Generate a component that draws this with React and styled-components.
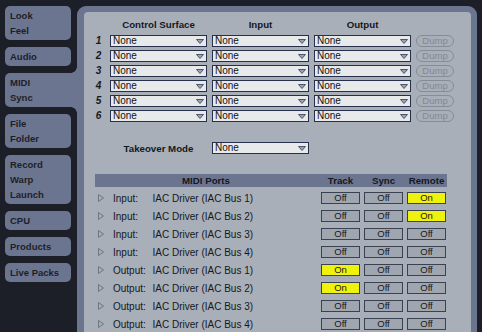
import styled, { createGlobalStyle } from 'styled-components';

const DARK = '#1c1f27';
const FRAME = '#6c7590';
const LIGHT = '#a8afb8';

const GlobalStyle = createGlobalStyle`
  html, body {
    margin: 0;
    padding: 0;
    background: ${DARK};
  }
  body {
    font-family: "Liberation Sans", Arial, sans-serif;
    color: #15181e;
  }
`;

const tabs = [
  ['Look', 'Feel'],
  ['Audio'],
  ['MIDI', 'Sync'],
  ['File', 'Folder'],
  ['Record', 'Warp', 'Launch'],
  ['CPU'],
  ['Products'],
  ['Live Packs'],
];

const ports = [
  { dir: 'Input:', bus: 1, track: false, sync: false, remote: true },
  { dir: 'Input:', bus: 2, track: false, sync: false, remote: true },
  { dir: 'Input:', bus: 3, track: false, sync: false, remote: false },
  { dir: 'Input:', bus: 4, track: false, sync: false, remote: false },
  { dir: 'Output:', bus: 1, track: true, sync: false, remote: false },
  { dir: 'Output:', bus: 2, track: true, sync: false, remote: false },
  { dir: 'Output:', bus: 3, track: false, sync: false, remote: false },
  { dir: 'Output:', bus: 4, track: false, sync: false, remote: false },
];

function Arrow() {
  return (
    <svg width="8" height="5" viewBox="0 0 8 5">
      <polygon points="0.5,0.5 7.5,0.5 4,4.5" fill="#9aa2b3" stroke="#4d566a" strokeWidth="1" />
    </svg>
  );
}

function Expander() {
  return (
    <svg width="6" height="8" viewBox="0 0 6 8">
      <polygon points="0.5,0.5 5.5,4 0.5,7.5" fill="none" stroke="#6d7484" strokeWidth="1" />
    </svg>
  );
}

function Select({ value = 'None' }) {
  return (
    <StSelect>
      <span>{value}</span>
      <Arrow />
    </StSelect>
  );
}

export default function App() {
  return (
    <>
      <GlobalStyle />
      <StPage>
        <StSidebar>
          {tabs.map((lines) => (
            <StTab key={lines[0]} $active={lines[0] === 'MIDI'}>
              {lines.map((l) => (
                <div key={l}>{l}</div>
              ))}
            </StTab>
          ))}
        </StSidebar>
        <StPanel>
          <StInner>
            <StSurfaceGrid>
              <span />
              <StColHead>Control Surface</StColHead>
              <StColHead>Input</StColHead>
              <StColHead>Output</StColHead>
              <span />
              {[1, 2, 3, 4, 5, 6].map((n) => (
                <StRowFrag key={n}>
                  <StNum>{n}</StNum>
                  <Select />
                  <Select />
                  <Select />
                  <StDump>Dump</StDump>
                </StRowFrag>
              ))}
            </StSurfaceGrid>

            <StTakeover>
              <StColHead>Takeover Mode</StColHead>
              <Select />
            </StTakeover>

            <StPorts>
              <StPortsHead>
                <span>MIDI Ports</span>
                <span>Track</span>
                <span>Sync</span>
                <span>Remote</span>
              </StPortsHead>
              {ports.map((p) => (
                <StPortRow key={p.dir + p.bus}>
                  <StPortName>
                    <Expander />
                    <StDir>{p.dir}</StDir>
                    <span>IAC Driver (IAC Bus {p.bus})</span>
                  </StPortName>
                  <StToggle $on={p.track}>{p.track ? 'On' : 'Off'}</StToggle>
                  <StToggle $on={p.sync}>{p.sync ? 'On' : 'Off'}</StToggle>
                  <StToggle $on={p.remote}>{p.remote ? 'On' : 'Off'}</StToggle>
                </StPortRow>
              ))}
            </StPorts>
          </StInner>
        </StPanel>
      </StPage>
    </>
  );
}

const StPage = styled.div`
  width: 482px;
  height: 332px;
  box-sizing: border-box;
  padding: 6px 5px 0 5px;
  display: flex;
  gap: 6px;
  overflow: hidden;
  background: ${DARK};
`;

const StSidebar = styled.div`
  width: 66px;
  flex: none;
  display: flex;
  flex-direction: column;
  gap: 7px;
`;

const StTab = styled.div`
  position: relative;
  background: ${FRAME};
  border-radius: ${(p) => (p.$active ? '5px 0 0 5px' : '5px')};
  margin-right: ${(p) => (p.$active ? '-6px' : '0')};
  padding: 2px 0 2px 5px;
  font-size: 9.5px;
  font-weight: bold;
  line-height: 15px;
  color: ${DARK};
  &::before,
  &::after {
    content: '';
    display: ${(p) => (p.$active ? 'block' : 'none')};
    position: absolute;
    right: 0;
    width: 6px;
    height: 6px;
  }
  &::before {
    top: -6px;
    background: radial-gradient(circle at 0 0, transparent 5.5px, ${FRAME} 6px);
  }
  &::after {
    bottom: -6px;
    background: radial-gradient(circle at 0 100%, transparent 5.5px, ${FRAME} 6px);
  }
`;

const StPanel = styled.div`
  width: 400px;
  flex: none;
  background: ${FRAME};
  border-radius: 9px 9px 0 0;
  padding: 6px 6px 0 7px;
  box-sizing: border-box;
  display: flex;
`;

const StInner = styled.div`
  flex: 1;
  background: ${LIGHT};
  border-radius: 4px 4px 0 0;
  padding-top: 5px;
`;

const StSurfaceGrid = styled.div`
  display: grid;
  grid-template-columns: 13px 97px 97px 97px 38px;
  grid-template-rows: 15px;
  grid-auto-rows: 12px;
  column-gap: 5px;
  row-gap: 3px;
  padding-left: 8px;
`;

const StRowFrag = styled.div`
  display: contents;
`;

const StColHead = styled.div`
  font-size: 9.7px;
  font-weight: bold;
  text-align: center;
  align-self: center;
  width: 97px;
  color: #15181e;
`;

const StNum = styled.div`
  font-size: 10px;
  font-weight: bold;
  font-style: italic;
  text-align: center;
  line-height: 12px;
`;

const StSelect = styled.div`
  box-sizing: border-box;
  height: 12px;
  border: 1px solid #27304a;
  background: #e8e9ea;
  display: flex;
  align-items: center;
  justify-content: space-between;
  padding: 0 2px 0 2px;
  font-size: 10px;
  line-height: 10px;
  color: #111;
  width: 97px;
`;

const StDump = styled.div`
  box-sizing: border-box;
  height: 12px;
  border: 1px solid #878d96;
  border-radius: 6px;
  font-size: 9.5px;
  line-height: 10px;
  color: #838992;
  text-align: center;
`;

const StTakeover = styled.div`
  display: flex;
  align-items: center;
  gap: 5px;
  margin-top: 20px;
  padding-left: 26px;
  height: 12px;
`;

const StPorts = styled.div`
  margin: 20px 0 0 11px;
  width: 352px;
`;

const StPortsHead = styled.div`
  display: grid;
  grid-template-columns: 1fr 39px 39px 39px;
  column-gap: 4px;
  padding-right: 1px;
  height: 13px;
  align-items: center;
  background: ${FRAME};
  font-size: 9.7px;
  font-weight: bold;
  text-align: center;
  color: #15181e;
  margin-bottom: 2px;
`;

const StPortRow = styled.div`
  display: grid;
  grid-template-columns: 1fr 39px 39px 39px;
  column-gap: 4px;
  padding-right: 1px;
  height: 18px;
  align-items: center;
`;

const StPortName = styled.div`
  display: flex;
  align-items: center;
  padding-left: 3px;
  font-size: 10px;
  color: #15181e;
  svg {
    margin-right: 9px;
    flex: none;
  }
`;

const StDir = styled.span`
  width: 39.5px;
  flex: none;
`;

const StToggle = styled.div`
  box-sizing: border-box;
  height: 12px;
  border: 1px solid #3a4252;
  background: ${(p) => (p.$on ? '#eef20c' : '#9fa6af')};
  font-size: 9.5px;
  line-height: 10px;
  text-align: center;
  color: #15181e;
`;
